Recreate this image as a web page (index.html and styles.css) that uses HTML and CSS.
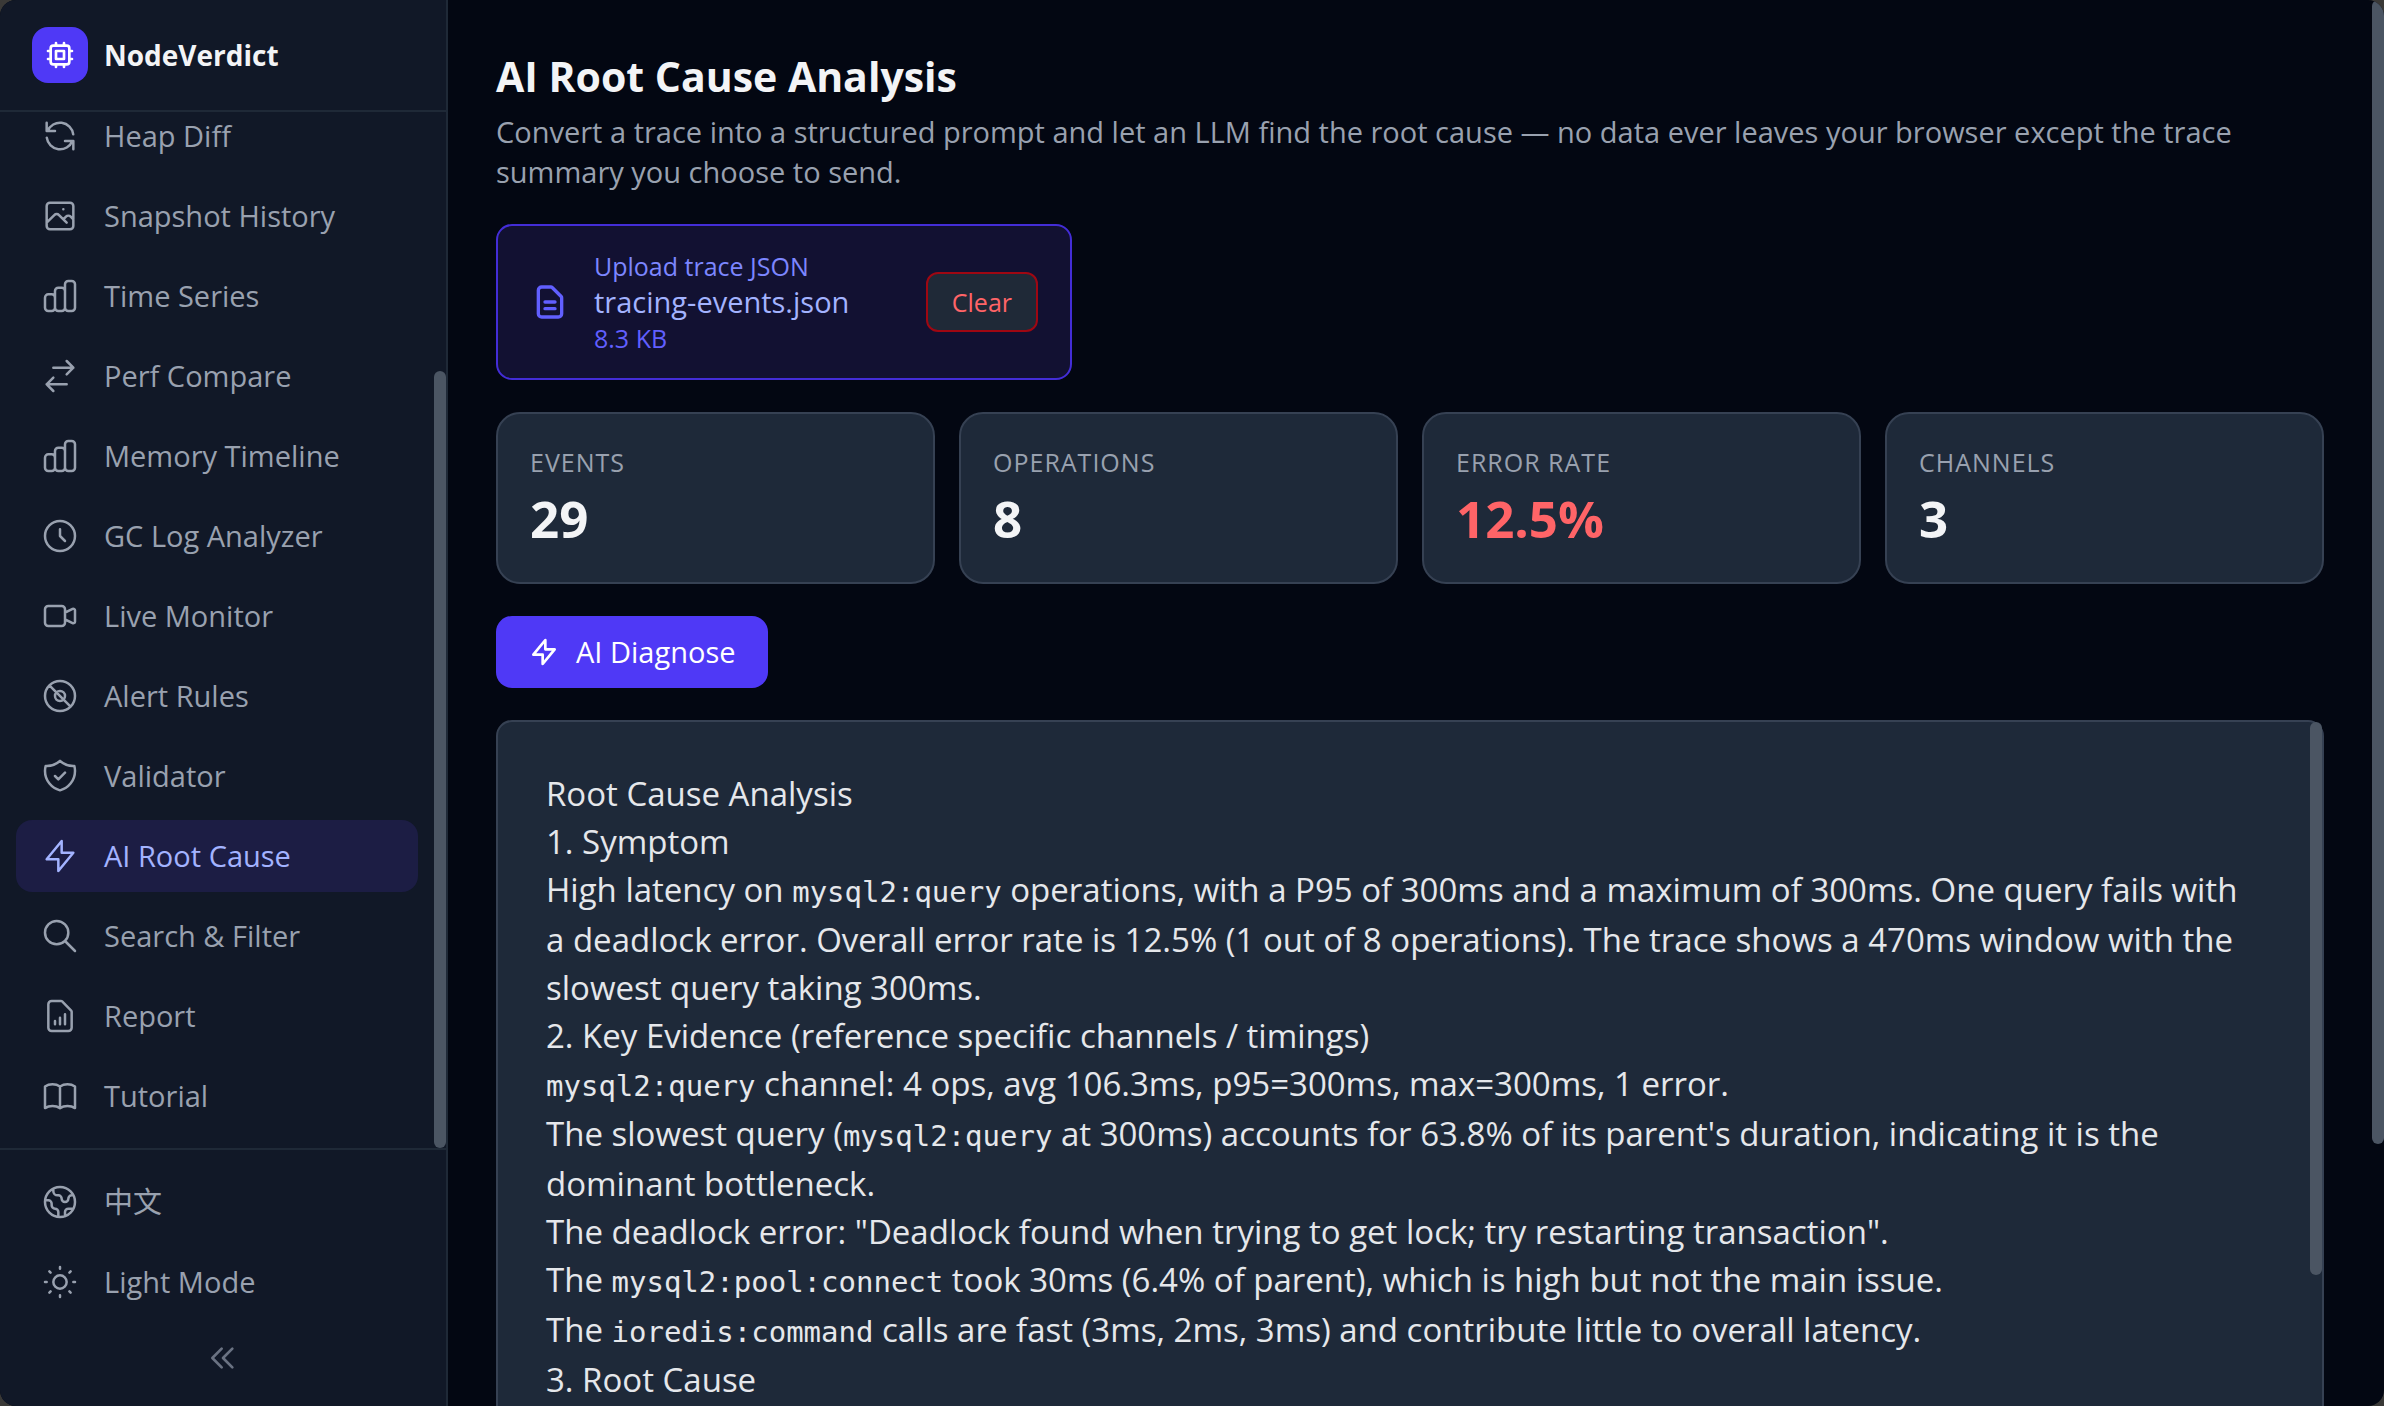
FILE: index.html
```html
<!DOCTYPE html>
<html lang="en">
<head>
<meta charset="utf-8">
<title>NodeVerdict</title>
<meta name="viewport" content="width=device-width, initial-scale=1">
<link rel="stylesheet" href="styles.css">
</head>
<body>
<div class="app">
  <aside class="sidebar">
    <header class="brand">
      <span class="brand-logo"><svg class="icon icon-sm" viewBox="0 0 24 24"><path d="M9 3v2m6-2v2M9 19v2m6-2v2M5 9H3m2 6H3m18-6h-2m2 6h-2M7 19h10a2 2 0 002-2V7a2 2 0 00-2-2H7a2 2 0 00-2 2v10a2 2 0 002 2zM9 9h6v6H9V9z"/></svg></span>
      <span class="brand-name">NodeVerdict</span>
    </header>
    <div class="nav-wrap">
      <nav class="nav">
        <a class="item" href="#heap"><svg class="icon" viewBox="0 0 24 24"><path d="M4 4v5h.582m15.356 2A8.001 8.001 0 004.582 9m0 0H9m11 11v-5h-.581m0 0a8.003 8.003 0 01-15.357-2m15.357 2H15"/></svg>Heap Diff</a>
        <a class="item" href="#snapshots"><svg class="icon" viewBox="0 0 24 24"><path d="M4 16l4.586-4.586a2 2 0 012.828 0L16 16m-2-2l1.586-1.586a2 2 0 012.828 0L20 14m-6-6h.01M6 20h12a2 2 0 002-2V6a2 2 0 00-2-2H6a2 2 0 00-2 2v12a2 2 0 002 2z"/></svg>Snapshot History</a>
        <a class="item" href="#series"><svg class="icon" viewBox="0 0 24 24"><path d="M9 19v-6a2 2 0 00-2-2H5a2 2 0 00-2 2v6a2 2 0 002 2h2a2 2 0 002-2zm0 0V9a2 2 0 012-2h2a2 2 0 012 2v10m-6 0a2 2 0 002 2h2a2 2 0 002-2m0 0V5a2 2 0 012-2h2a2 2 0 012 2v14a2 2 0 01-2 2h-2a2 2 0 01-2-2z"/></svg>Time Series</a>
        <a class="item" href="#compare"><svg class="icon" viewBox="0 0 24 24"><path d="M8 7h12m0 0l-4-4m4 4l-4 4m0 6H4m0 0l4 4m-4-4l4-4"/></svg>Perf Compare</a>
        <a class="item" href="#memory"><svg class="icon" viewBox="0 0 24 24"><path d="M9 19v-6a2 2 0 00-2-2H5a2 2 0 00-2 2v6a2 2 0 002 2h2a2 2 0 002-2zm0 0V9a2 2 0 012-2h2a2 2 0 012 2v10m-6 0a2 2 0 002 2h2a2 2 0 002-2m0 0V5a2 2 0 012-2h2a2 2 0 012 2v14a2 2 0 01-2 2h-2a2 2 0 01-2-2z"/></svg>Memory Timeline</a>
        <a class="item" href="#gc"><svg class="icon" viewBox="0 0 24 24"><path d="M12 8v4l3 3m6-3a9 9 0 11-18 0 9 9 0 0118 0z"/></svg>GC Log Analyzer</a>
        <a class="item" href="#live"><svg class="icon" viewBox="0 0 24 24"><path d="M15 10l4.553-2.276A1 1 0 0121 8.618v6.764a1 1 0 01-1.447.894L15 14M5 18h8a2 2 0 002-2V8a2 2 0 00-2-2H5a2 2 0 00-2 2v8a2 2 0 002 2z"/></svg>Live Monitor</a>
        <a class="item" href="#alerts"><svg class="icon" viewBox="0 0 24 24"><path d="M5.636 5.636l12.728 12.728M21 12a9 9 0 11-18 0 9 9 0 0118 0zM15 12a3 3 0 11-6 0 3 3 0 016 0z"/></svg>Alert Rules</a>
        <a class="item" href="#validator"><svg class="icon" viewBox="0 0 24 24"><path d="M9 12l2 2 4-4m5.618-4.016A11.955 11.955 0 0112 2.944a11.955 11.955 0 01-8.618 3.04A12.02 12.02 0 003 9c0 5.591 3.824 10.29 9 11.622 5.176-1.332 9-6.03 9-11.622 0-1.042-.133-2.052-.382-3.016z"/></svg>Validator</a>
        <a class="item item-active" href="#root-cause" aria-current="page"><svg class="icon" viewBox="0 0 24 24"><path d="M13 10V3L4 14h7v7l9-11h-7z"/></svg>AI Root Cause</a>
        <a class="item" href="#search"><svg class="icon" viewBox="0 0 24 24"><path d="M21 21l-6-6m2-5a7 7 0 11-14 0 7 7 0 0114 0z"/></svg>Search &amp; Filter</a>
        <a class="item" href="#report"><svg class="icon" viewBox="0 0 24 24"><path d="M9 17v-2m3 2v-4m3 4v-6m2 10H7a2 2 0 01-2-2V5a2 2 0 012-2h5.586a1 1 0 01.707.293l5.414 5.414a1 1 0 01.293.707V19a2 2 0 01-2 2z"/></svg>Report</a>
        <a class="item" href="#tutorial"><svg class="icon" viewBox="0 0 24 24"><path d="M12 6.253v13m0-13C10.832 5.477 9.246 5 7.5 5S4.168 5.477 3 6.253v13C4.168 18.477 5.754 18 7.5 18s3.332.477 4.5 1.253m0-13C13.168 5.477 14.754 5 16.5 5c1.747 0 3.332.477 4.5 1.253v13C19.832 18.477 18.247 18 16.5 18c-1.746 0-3.332.477-4.5 1.253"/></svg>Tutorial</a>
      </nav>
      <span class="thumb thumb-nav"></span>
    </div>
    <footer class="side-foot">
      <button class="item" type="button"><svg class="icon" viewBox="0 0 24 24"><path d="M3.055 11H5a2 2 0 012 2v1a2 2 0 002 2 2 2 0 012 2v2.945M8 3.935V5.5A2.5 2.5 0 0010.5 8h.5a2 2 0 012 2 2 2 0 104 0 2 2 0 012-2h1.064M15 20.488V18a2 2 0 012-2h3.064M21 12a9 9 0 11-18 0 9 9 0 0118 0z"/></svg><span lang="zh">中文</span></button>
      <button class="item" type="button"><svg class="icon" viewBox="0 0 24 24"><path d="M12 3v1m0 16v1m9-9h-1M4 12H3m15.364 6.364l-.707-.707M6.343 6.343l-.707-.707m12.728 0l-.707.707M6.343 17.657l-.707.707M16 12a4 4 0 11-8 0 4 4 0 018 0z"/></svg>Light Mode</button>
      <button class="collapse" type="button" aria-label="Collapse sidebar"><svg class="icon icon-sm" viewBox="0 0 24 24"><path d="M11 19l-7-7 7-7m8 14l-7-7 7-7"/></svg></button>
    </footer>
  </aside>

  <div class="main-wrap">
    <main class="main">
      <div class="heading">
        <h1 class="title">AI Root Cause Analysis</h1>
        <p class="subtitle">Convert a trace into a structured prompt and let an LLM find the root cause — no data ever leaves your browser except the trace summary you choose to send.</p>
      </div>

      <section class="upload">
        <svg class="icon icon-bold" viewBox="0 0 24 24"><path d="M9 12h6m-6 4h6m2 5H7a2 2 0 01-2-2V5a2 2 0 012-2h5.586a1 1 0 01.707.293l5.414 5.414a1 1 0 01.293.707V19a2 2 0 01-2 2z"/></svg>
        <div class="upload-text">
          <p class="upload-label">Upload trace JSON</p>
          <p class="upload-name">tracing-events.json</p>
          <p class="upload-size">8.3 KB</p>
        </div>
        <button class="clear" type="button">Clear</button>
      </section>

      <section class="stats">
        <div class="stat"><p class="stat-label">Events</p><p class="stat-value">29</p></div>
        <div class="stat"><p class="stat-label">Operations</p><p class="stat-value">8</p></div>
        <div class="stat"><p class="stat-label">Error rate</p><p class="stat-value stat-bad">12.5%</p></div>
        <div class="stat"><p class="stat-label">Channels</p><p class="stat-value">3</p></div>
      </section>

      <button class="diagnose" type="button"><svg class="icon icon-sm" viewBox="0 0 24 24"><path d="M13 10V3L4 14h7v7l9-11h-7z"/></svg>AI Diagnose</button>

      <section class="report">
        <p>Root Cause Analysis</p>
        <p>1. Symptom</p>
        <p>High latency on <code>mysql2:query</code> operations, with a P95 of 300ms and a maximum of 300ms. One query fails with a deadlock error. Overall error rate is 12.5% (1 out of 8 operations). The trace shows a 470ms window with the slowest query taking 300ms.</p>
        <p>2. Key Evidence (reference specific channels / timings)</p>
        <p><code>mysql2:query</code> channel: 4 ops, avg 106.3ms, p95=300ms, max=300ms, 1 error.</p>
        <p>The slowest query (<code>mysql2:query</code> at 300ms) accounts for 63.8% of its parent's duration, indicating it is the dominant bottleneck.</p>
        <p>The deadlock error: "Deadlock found when trying to get lock; try restarting transaction".</p>
        <p>The <code>mysql2:pool:connect</code> took 30ms (6.4% of parent), which is high but not the main issue.</p>
        <p>The <code>ioredis:command</code> calls are fast (3ms, 2ms, 3ms) and contribute little to overall latency.</p>
        <p>3. Root Cause</p>
        <span class="thumb thumb-report"></span>
      </section>
    </main>
    <span class="thumb thumb-main"></span>
  </div>
</div>
</body>
</html>
```

FILE: styles.css
```css
* { box-sizing: border-box; }

body {
  margin: 0;
  background: #3a3937;
  color: #f3f4f6;
  font-family: "Open Sans", "Noto Sans CJK SC", sans-serif;
  font-size: 29px;
  line-height: 40px;
}

h1, p { margin: 0; }

button {
  font: inherit;
  color: inherit;
  background: none;
  border: 0;
  cursor: pointer;
}

.app {
  display: flex;
  height: 100vh;
  overflow: hidden;
  border-radius: 16px;
  background: #030712;
}

.icon {
  flex: none;
  width: 40px;
  height: 40px;
  fill: none;
  stroke: currentColor;
  stroke-width: 1.5;
  stroke-linecap: round;
  stroke-linejoin: round;
}
.icon-sm { width: 32px; height: 32px; stroke-width: 2; }
.icon-bold { stroke-width: 2; }

.thumb {
  position: absolute;
  right: 0;
  width: 12px;
  border-radius: 6px;
  background: #4b5563;
}

/* Sidebar */
.sidebar {
  flex: none;
  display: flex;
  flex-direction: column;
  width: 448px;
  border-right: 2px solid #1f2937;
  background: #111827;
}

.brand {
  display: flex;
  align-items: center;
  gap: 16px;
  height: 112px;
  padding: 0 32px;
  border-bottom: 2px solid #1f2937;
}
.brand-logo {
  display: grid;
  place-items: center;
  width: 56px;
  height: 56px;
  border-radius: 16px;
  background: #4f39f6;
  color: #fff;
}
.brand-name { font-size: 28px; font-weight: 700; }

.nav-wrap {
  position: relative;
  flex: 1;
  min-height: 0;
}
.nav {
  display: flex;
  flex-direction: column;
  justify-content: flex-end;
  gap: 8px;
  height: 100%;
  padding: 16px 28px 16px 16px;
  overflow: hidden;
}
.thumb-nav { bottom: 0; height: 75%; }

.item {
  flex: none;
  display: flex;
  align-items: center;
  gap: 24px;
  padding: 16px 24px;
  border-radius: 16px;
  color: #99a1af;
  text-align: left;
  text-decoration: none;
}
.item-active { background: #1c1d44; color: #a3b3ff; }

.side-foot {
  display: flex;
  flex-direction: column;
  gap: 8px;
  padding: 16px;
  border-top: 2px solid #1f2937;
}
.collapse {
  display: grid;
  place-items: center;
  padding: 16px;
  color: #6a7282;
}

/* Main column */
.main-wrap {
  position: relative;
  flex: 1;
  min-width: 0;
}
.main {
  display: flex;
  flex-direction: column;
  align-items: flex-start;
  gap: 32px;
  height: 100%;
  padding: 48px 60px 48px 48px;
  overflow: hidden;
}
.main > * { flex: none; }
.thumb-main { top: 0; height: 1144px; }

.heading { display: grid; gap: 8px; width: 100%; }
.title { font-size: 41px; line-height: 56px; font-weight: 700; }
.subtitle { color: #99a1af; }

.upload {
  display: flex;
  align-items: center;
  gap: 24px;
  width: 576px;
  max-width: 100%;
  padding: 24px 32px;
  border: 2px solid #432dd7;
  border-radius: 16px;
  background: #121132;
  color: #615fff;
}
.upload-text { flex: 1; }
.upload-label, .upload-size, .clear, .stat-label { font-size: 25px; line-height: 32px; }
.upload-label { color: #7c86ff; }
.upload-name { color: #a3b3ff; }
.clear {
  padding: 12px 24px;
  border: 2px solid #9f0712;
  border-radius: 12px;
  background: #1f2937;
  color: #ff6467;
}

.stats {
  display: grid;
  grid-template-columns: repeat(4, 1fr);
  gap: 24px;
  width: 100%;
}
.stat {
  display: grid;
  gap: 8px;
  padding: 32px;
  border: 2px solid #364153;
  border-radius: 24px;
  background: #1e2939;
}
.stat-label { color: #99a1af; text-transform: uppercase; letter-spacing: 1px; }
.stat-value { font-size: 51px; line-height: 64px; font-weight: 700; }
.stat-bad { color: #ff6467; }

.diagnose {
  display: flex;
  align-items: center;
  gap: 16px;
  padding: 16px 32px;
  border-radius: 16px;
  background: #4f39f6;
  color: #fff;
}

.report {
  position: relative;
  width: 100%;
  padding: 48px 60px 48px 48px;
  border: 2px solid #364153;
  border-radius: 16px;
  background: #1e2939;
  color: #e5e7eb;
  font-size: 33px;
  line-height: 48px;
}
.report code { font-family: "DejaVu Sans Mono", monospace; font-size: 29px; }
.thumb-report { top: 0; height: 553px; }
```
